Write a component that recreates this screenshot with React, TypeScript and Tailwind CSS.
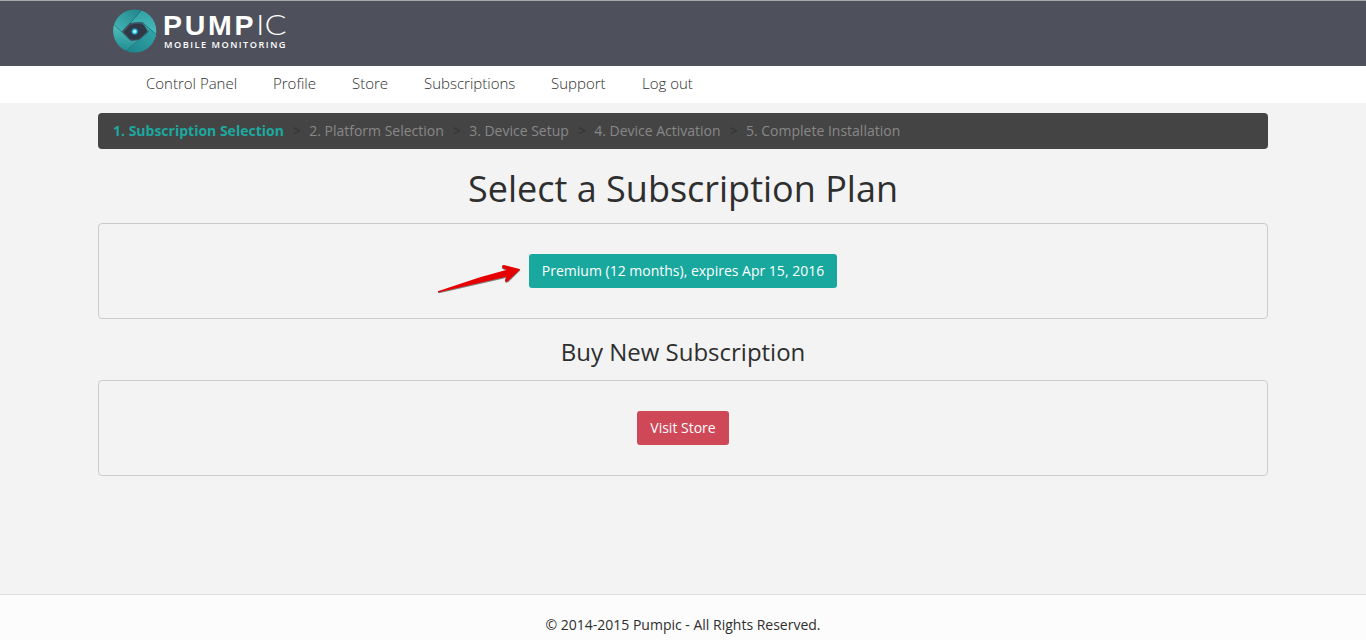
import { Fragment } from "react";

const links = [
  { label: "Control Panel", width: "w-[91px]" },
  { label: "Profile", width: "w-[43px]" },
  { label: "Store", width: "w-[36px]" },
  { label: "Subscriptions", width: "w-[91px]" },
  { label: "Support", width: "w-[55px]" },
  { label: "Log out", width: "w-[51px]" },
];

const steps = [
  "1. Subscription Selection",
  "2. Platform Selection",
  "3. Device Setup",
  "4. Device Activation",
  "5. Complete Installation",
];

function Logo() {
  return (
    <svg width="180" height="50" viewBox="0 0 180 50" aria-label="Pumpic Mobile Monitoring">
      <defs>
        <linearGradient id="top" x1="0" y1="1" x2="1" y2="0">
          <stop offset="0" stopColor="#48b9ba" />
          <stop offset="1" stopColor="#1c8087" />
        </linearGradient>
        <linearGradient id="right" x1="0" y1="0" x2="0" y2="1">
          <stop offset="0" stopColor="#2f9da1" />
          <stop offset="1" stopColor="#52c3c3" />
        </linearGradient>
        <linearGradient id="bottom" x1="1" y1="0" x2="0" y2="1">
          <stop offset="0" stopColor="#38abb0" />
          <stop offset="1" stopColor="#188087" />
        </linearGradient>
        <linearGradient id="left" x1="0" y1="0" x2="0" y2="1">
          <stop offset="0" stopColor="#55c4c2" />
          <stop offset="1" stopColor="#1b858c" />
        </linearGradient>
        <radialGradient id="lens">
          <stop offset="0" stopColor="#ffffff" />
          <stop offset="0.35" stopColor="#65e5ff" />
          <stop offset="0.65" stopColor="#168bb0" />
          <stop offset="1" stopColor="#303746" stopOpacity="0" />
        </radialGradient>
        <clipPath id="disc">
          <circle cx="21.7" cy="24" r="21.6" />
        </clipPath>
      </defs>
      <g clipPath="url(#disc)">
        <path d="M0 0 H30 L29 4 L8 25 L0 18Z" fill="url(#top)" />
        <path d="M28 4 L44 0 V34 L30 15 L17 16Z" fill="url(#right)" />
        <path d="M28 14 L44 28 V48 H9 L35 25Z" fill="url(#bottom)" />
        <path d="M0 16 L18 34 L27 33 L10 48 H0Z" fill="url(#left)" />
        <path d="M11 25 L17 18 Q25 15.5 31 18 L34.5 24 L27 31.5 Q22 33.5 17 32Z" fill="#303746" />
        <path d="M0 16.5 L17 33 M28 4 L9 25 M17 17 Q26 14 31 17 L44 28 M36 24 L11 46" stroke="#19676f" strokeWidth="0.7" fill="none" />
      </g>
      <circle cx="21.7" cy="24.5" r="4.3" fill="url(#lens)" />
      <text x="50" y="28" textLength="90.5" fill="#fff" fontFamily="Liberation Sans, sans-serif" fontSize="28.5" fontWeight="700">PUMP</text>
      <text x="143" y="28" textLength="30.5" lengthAdjust="spacingAndGlyphs" fill="#fff" fontFamily="Lato, sans-serif" fontSize="27.5" fontWeight="300">IC</text>
      <text x="51" y="40.5" textLength="121.5" fill="#fff" fontFamily="Open Sans, sans-serif" fontSize="9.2" fontWeight="600">MOBILE MONITORING</text>
    </svg>
  );
}

export default function App() {
  return (
    <div className="flex h-[640px] flex-col overflow-hidden bg-[#f3f3f3] font-['Open_Sans','Noto_Sans',sans-serif] text-sm leading-5 text-[#2e2e2e]">
      <header className="h-[66px] shrink-0 border-t border-[#a6a7a6] bg-[#4e505c] pl-[113px] pt-[6px]">
        <Logo />
      </header>
      <nav className="flex h-[37px] shrink-0 items-center gap-9 bg-white pl-[146px] text-[15px] font-light">
        {links.map(({ label, width }) => (
          <a key={label} href="#" className={`${width} whitespace-nowrap pb-1`}>{label}</a>
        ))}
      </nav>
      <main className="mx-[98px] flex grow flex-col">
        <ol className="mt-2.5 flex h-9 items-center rounded bg-[#444] px-[15px] text-[#888]">
          {steps.map((step, i) => (
            <Fragment key={step}>
              {i > 0 && <li className="w-[25.3px] pl-[9px] text-[#333]">&gt;</li>}
              <li className={i === 0 ? "font-bold text-[#1ba99f]" : ""}>{step}</li>
            </Fragment>
          ))}
        </ol>
        <h1 className="mt-5 text-center text-[36px] leading-10">Select a Subscription Plan</h1>
        <section className="relative mt-[14px] flex h-24 items-center justify-center rounded border border-[#ccc]">
          <button className="h-[34px] w-[308px] rounded-[3px] bg-[#18a89e] text-white">Premium (12 months), expires Apr 15, 2016</button>
          <svg className="absolute left-[338px] top-[38px]" width="86" height="34" viewBox="0 0 86 34" aria-hidden="true">
            <path d="M1 30 L43 16.5 L70.5 9 L65.5 7 Q64 4 67 4 L83.5 8.3 L71.5 20 Q68 22 68.5 19 L69 16 L2 31.3Z" fill="#444" opacity="0.65" />
            <path d="M0.8 29.3 L43 15.2 L70 7.8 L65.8 6.2 Q64 3 67 3 L83.3 7.3 L71 19 Q68 21.5 68 18 L69.5 14.5 L67 15.3 L1 30.4Z" fill="#e60000" />
          </svg>
        </section>
        <h2 className="mt-[19px] text-center text-2xl leading-[27px]">Buy New Subscription</h2>
        <section className="mt-[15px] flex h-24 items-center justify-center rounded border border-[#ccc]">
          <button className="h-[34px] w-[92px] rounded-[3px] bg-[#cf4858] text-white">Visit Store</button>
        </section>
      </main>
      <footer className="h-[46px] shrink-0 border-t border-[#ddd] bg-[#fcfcfc] pt-5 text-center">© 2014-2015 Pumpic - All Rights Reserved.</footer>
    </div>
  );
}
